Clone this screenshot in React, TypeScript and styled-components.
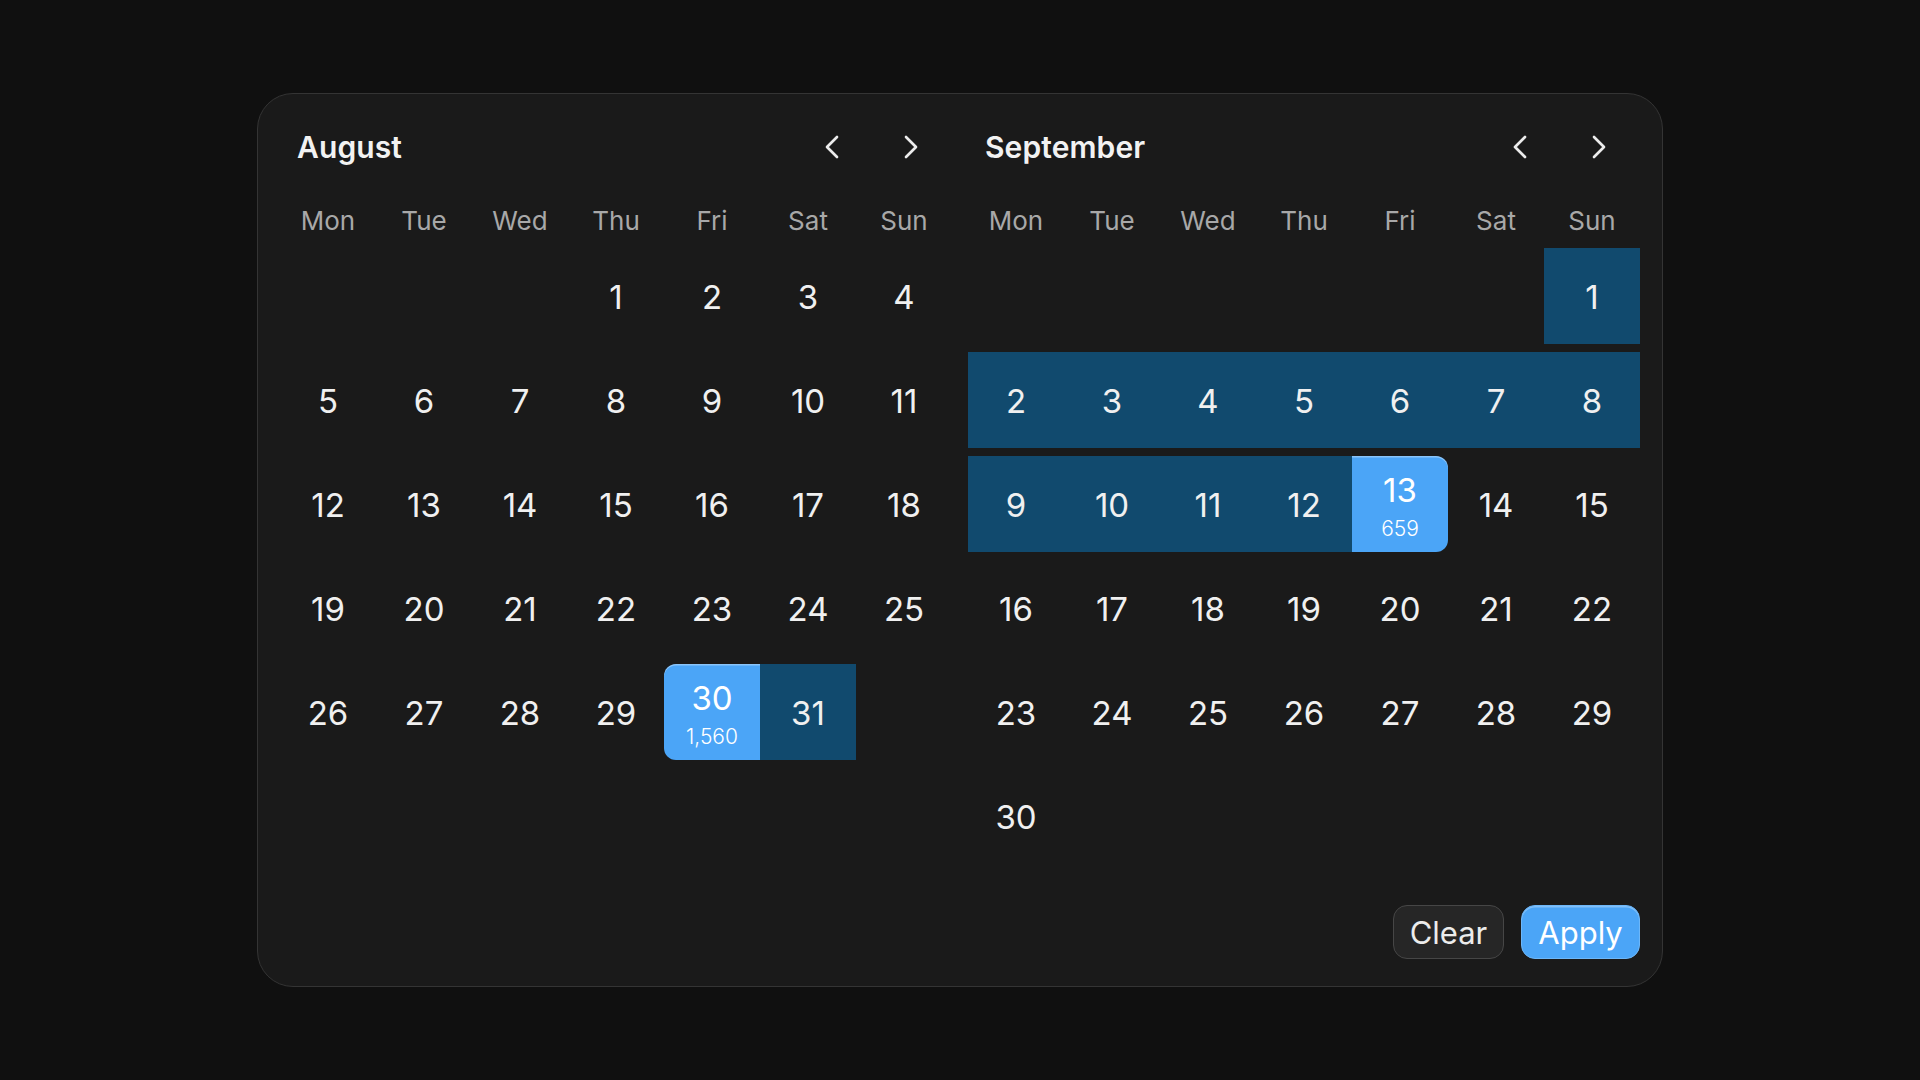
import React from 'react';
import styled, { createGlobalStyle, css } from 'styled-components';
import { ChevronLeft, ChevronRight } from 'lucide-react';

const GlobalStyle = createGlobalStyle`
    html, body {
        margin: 0;
        padding: 0;
        background: #101010;
        font-family: Inter, 'Noto Sans', 'Liberation Sans', sans-serif;
        -webkit-font-smoothing: antialiased;
    }
`;

const Page = styled.div`
    width: 1920px;
    height: 1080px;
    display: flex;
    align-items: center;
    justify-content: center;
    background: #101010;
`;

const Panel = styled.div`
    box-sizing: border-box;
    width: 1406px;
    height: 894px;
    padding: 22px 22px 26px;
    background: #1a1a1a;
    border: 1px solid #343434;
    border-radius: 36px;
    display: flex;
    flex-direction: column;
`;

const Months = styled.div`
    display: flex;
    gap: 16px;
    align-items: flex-start;
`;

const Month = styled.div`
    width: 672px;
    display: flex;
    flex-direction: column;
`;

const Header = styled.div`
    height: 62px;
    padding: 0 17px;
    display: flex;
    align-items: center;
    justify-content: space-between;
`;

const Title = styled.h2`
    margin: 0;
    font-size: 30px;
    font-weight: 600;
    color: #f2f2f2;
    letter-spacing: 0.1px;
`;

const Nav = styled.div`
    display: flex;
    gap: 31px;
`;

const NavButton = styled.button`
    width: 48px;
    height: 48px;
    padding: 0;
    border: none;
    background: transparent;
    color: #ececec;
    display: flex;
    align-items: center;
    justify-content: center;
    cursor: pointer;
`;

const WeekRow = styled.div`
    display: grid;
    grid-template-columns: repeat(7, 96px);
    height: 48px;
    margin: 18px 0 4px;
    align-items: center;
`;

const WeekDay = styled.span`
    text-align: center;
    font-size: 26px;
    color: #a8a8a8;
`;

const DayGrid = styled.div`
    display: grid;
    grid-template-columns: repeat(7, 96px);
    grid-auto-rows: 96px;
    row-gap: 8px;
`;

type Kind = 'none' | 'range' | 'start' | 'end';

const Cell = styled.div<{ $kind: Kind }>`
    display: flex;
    flex-direction: column;
    align-items: center;
    justify-content: center;
    gap: 11px;
    color: #f0f0f0;
    ${({ $kind }) =>
        $kind === 'range' &&
        css`
            background: #114a6e;
        `}
    ${({ $kind }) =>
        ($kind === 'start' || $kind === 'end') &&
        css`
            background: #4ba5f7;
            color: #ffffff;
            box-shadow: inset 0 1.5px 0 rgba(255, 255, 255, 0.35);
        `}
    ${({ $kind }) =>
        $kind === 'start' &&
        css`
            border-radius: 12px 0 0 12px;
        `}
    ${({ $kind }) =>
        $kind === 'end' &&
        css`
            border-radius: 0 12px 12px 0;
        `}
`;

const DayNum = styled.span`
    font-size: 33px;
    line-height: 36px;
    padding-top: 2px;
`;

const Count = styled.span`
    font-size: 21px;
    line-height: 20px;
    font-weight: 300;
`;

const Footer = styled.div`
    margin-top: 41px;
    display: flex;
    justify-content: flex-end;
    gap: 17px;
`;

const Button = styled.button<{ $primary?: boolean }>`
    box-sizing: border-box;
    height: 54px;
    padding: 0 14px;
    border-radius: 14px;
    font-family: inherit;
    font-size: 31px;
    cursor: pointer;
    ${({ $primary }) =>
        $primary
            ? css`
                  min-width: 119px;
                  background: #4ba5f7;
                  color: #ffffff;
                  border: 1px solid #6db7f9;
                  box-shadow: inset 0 1.5px 0 rgba(255, 255, 255, 0.3);
              `
            : css`
                  min-width: 111px;
                  background: #262626;
                  color: #ececec;
                  border: 1.5px solid #464646;
              `}
`;

const WEEKDAYS = ['Mon', 'Tue', 'Wed', 'Thu', 'Fri', 'Sat', 'Sun'];

interface MonthData {
    name: string;
    offset: number;
    days: number;
    kindOf: (d: number) => Kind;
    counts: Record<number, string>;
}

const months: MonthData[] = [
    {
        name: 'August',
        offset: 3,
        days: 31,
        kindOf: (d) => (d === 30 ? 'start' : d === 31 ? 'range' : 'none'),
        counts: { 30: '1,560' },
    },
    {
        name: 'September',
        offset: 6,
        days: 30,
        kindOf: (d) => (d === 13 ? 'end' : d < 13 ? 'range' : 'none'),
        counts: { 13: '659' },
    },
];

const MonthView = ({ month }: { month: MonthData }) => {
    const blanks = Array.from({ length: month.offset });
    const days = Array.from({ length: month.days }, (_, i) => i + 1);
    return (
        <Month>
            <Header>
                <Title>{month.name}</Title>
                <Nav>
                    <NavButton aria-label="Previous month">
                        <ChevronLeft size={40} strokeWidth={1.6} />
                    </NavButton>
                    <NavButton aria-label="Next month">
                        <ChevronRight size={40} strokeWidth={1.6} />
                    </NavButton>
                </Nav>
            </Header>
            <WeekRow>
                {WEEKDAYS.map((w) => (
                    <WeekDay key={w}>{w}</WeekDay>
                ))}
            </WeekRow>
            <DayGrid>
                {blanks.map((_, i) => (
                    <Cell key={`b${i}`} $kind="none" />
                ))}
                {days.map((d) => (
                    <Cell key={d} $kind={month.kindOf(d)}>
                        <DayNum>{d}</DayNum>
                        {month.counts[d] && <Count>{month.counts[d]}</Count>}
                    </Cell>
                ))}
            </DayGrid>
        </Month>
    );
};

export default function App() {
    return (
        <>
            <GlobalStyle />
            <Page>
                <Panel>
                    <Months>
                        {months.map((m) => (
                            <MonthView key={m.name} month={m} />
                        ))}
                    </Months>
                    <Footer>
                        <Button>Clear</Button>
                        <Button $primary>Apply</Button>
                    </Footer>
                </Panel>
            </Page>
        </>
    );
}
